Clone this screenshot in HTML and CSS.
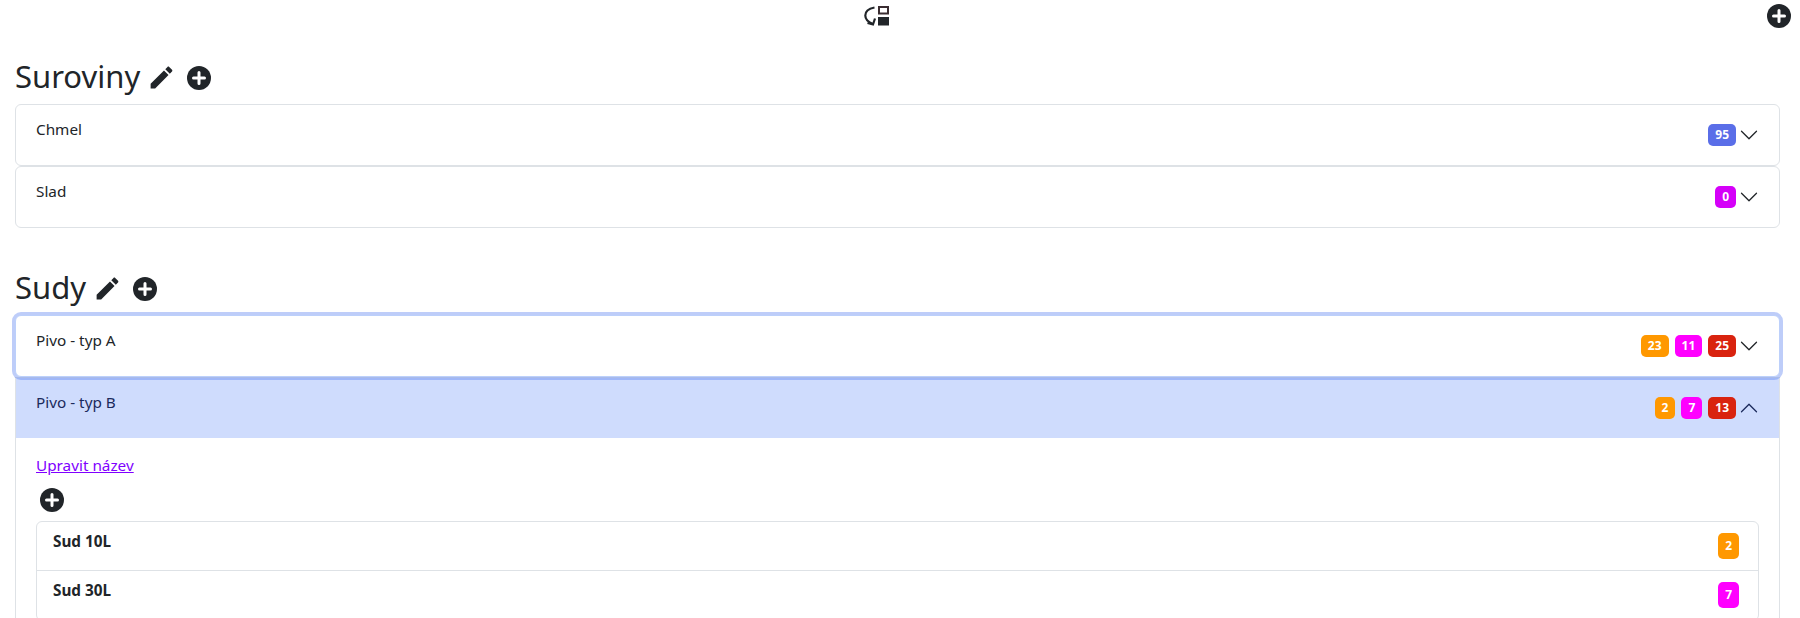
FILE: index.html
```html
<!DOCTYPE html>
<html lang="en">
<head>
  <meta charset="UTF-8" />
  <title>Sklad</title>
  <meta name="viewport" content="width=device-width, initial-scale=1.0" />
  <link rel="stylesheet" href="styles.css">
</head>
<body>
  <svg class="defs" width="0" height="0">
    <symbol id="plus" viewBox="0 0 24 24">
      <circle cx="12" cy="12" r="12" fill="#212529" />
      <path d="M12 6.500v11M6.500 12h11" stroke="#fff" stroke-width="3" stroke-linecap="round" />
    </symbol>
    <symbol id="pencil" viewBox="0 0 24 24">
      <path fill="#212529" d="M3 17.25V21h3.75L17.81 9.94l-3.75-3.75L3 17.25zM20.71 7.04c.39-.39.39-1.02 0-1.41l-2.34-2.34c-.39-.39-1.02-.39-1.41 0l-1.83 1.83 3.75 3.75 1.83-1.83z" />
    </symbol>
    <symbol id="chevron" viewBox="0 0 16 16">
      <path fill="currentColor" fill-rule="evenodd" d="M1.646 4.646a.5.5 0 0 1 .708 0L8 10.293l5.646-5.647a.5.5 0 0 1 .708.708l-6 6a.5.5 0 0 1-.708 0l-6-6a.5.5 0 0 1 0-.708z" />
    </symbol>
  </svg>

  <!-- Top bar -->
  <div class="topbar">
    <span></span>
    <svg class="switch" width="28" height="24" viewBox="0 0 28 24">
      <path d="M12.500 3.500C7 4.500 3.300 7.500 3.300 11.500c0 3.500 2.700 6.500 7.700 8.500" fill="none" stroke="#212529" stroke-width="2.200" />
      <path d="M13 14.500 11 20.500 5.500 19" fill="none" stroke="#212529" stroke-width="2.200" />
      <rect x="17" y="3" width="9" height="6.500" fill="#fff" stroke="#3a2d31" stroke-width="2" />
      <rect x="16" y="13" width="11" height="8.500" fill="#212529" />
    </svg>
    <svg class="plus plus-top"><use href="#plus" /></svg>
  </div>

  <!-- Suroviny -->
  <section class="group">
    <h2 class="group-title">Suroviny
      <svg class="pencil"><use href="#pencil" /></svg>
      <svg class="plus"><use href="#plus" /></svg>
    </h2>
    <div class="accordion">
      <div class="item">
        <div class="head">
          <span class="name">Chmel</span>
          <span class="badge blue">95</span>
          <svg class="chev"><use href="#chevron" /></svg>
        </div>
      </div>
      <div class="item">
        <div class="head">
          <span class="name">Slad</span>
          <span class="badge violet">0</span>
          <svg class="chev"><use href="#chevron" /></svg>
        </div>
      </div>
    </div>
  </section>

  <!-- Sudy -->
  <section class="group">
    <h2 class="group-title">Sudy
      <svg class="pencil"><use href="#pencil" /></svg>
      <svg class="plus"><use href="#plus" /></svg>
    </h2>
    <div class="accordion">
      <div class="item focused">
        <div class="head">
          <span class="name">Pivo - typ A</span>
          <span class="badge orange">23</span>
          <span class="badge pink">11</span>
          <span class="badge red">25</span>
          <svg class="chev"><use href="#chevron" /></svg>
        </div>
      </div>
      <div class="item open">
        <div class="head">
          <span class="name">Pivo - typ B</span>
          <span class="badge orange">2</span>
          <span class="badge pink">7</span>
          <span class="badge red">13</span>
          <svg class="chev"><use href="#chevron" /></svg>
        </div>
        <div class="body">
          <a class="rename" href="#">Upravit název</a>
          <svg class="plus plus-body"><use href="#plus" /></svg>
          <ul class="list">
            <li><b>Sud 10L</b><span class="badge tall orange">2</span></li>
            <li><b>Sud 30L</b><span class="badge tall pink">7</span></li>
          </ul>
        </div>
      </div>
    </div>
  </section>
</body>
</html>
```

FILE: styles.css
```css
/* ===== Basic Styles ===== */
html, body {
  height: 618px;
  overflow: hidden;
}
body {
  margin: 0;
  padding: 0 20px 0 15px;
  font-family: "Noto Sans", sans-serif;
  font-size: 15.3px;
  color: #212529;
  background: #fff;
}
.defs {
  position: absolute;
}
.topbar {
  display: flex;
  justify-content: space-between;
  align-items: center;
  height: 32px;
  margin-right: -11px;
}
.switch {
  display: block;
  margin-right: 30px;
}
.plus {
  width: 24px;
  height: 24px;
  flex: none;
}
.pencil {
  width: 29px;
  height: 29px;
  margin: 0 3px 0 -1px;
  vertical-align: -4px;
}
.group {
  margin-bottom: 39px;
}
.group-title {
  margin: 24px 0 8px;
  font-size: 31px;
  font-weight: 400;
  line-height: 40px;
}
.group-title .plus {
  vertical-align: -2px;
}

/* ===== Accordion ===== */
.item {
  border: 1px solid #dee2e6;
  border-radius: 6px;
  background: #fff;
}
.head {
  display: flex;
  align-items: center;
  gap: 6px;
  height: 60px;
  padding: 0 20px;
}
.name {
  margin: -12px auto 0 0;
}
.chev {
  width: 20px;
  height: 20px;
  margin-left: -3px;
}
.badge {
  height: 22px;
  padding: 0 7px;
  border-radius: 5px;
  color: #fff;
  font-size: 12px;
  font-weight: 700;
  line-height: 22px;
  text-align: center;
}
.blue { background: #5a6ee8; }
.violet { background: #d500f9; }
.orange { background: #ff9800; }
.pink { background: #ff00ff; }
.red { background: #d9230f; }
.focused {
  position: relative;
  z-index: 1;
  border-color: #bcd0fb;
  box-shadow: 0 0 0 3px rgba(80, 120, 240, 0.37);
}
.open {
  border-radius: 0;
}
.open .head {
  background: #cfdcfd;
  color: #1b2a5c;
}
.open .chev {
  transform: rotate(180deg);
}
.body {
  padding: 15px 20px 16px;
}
.rename {
  display: block;
  color: #8000ff;
  line-height: 24px;
}
.plus-body {
  display: block;
  margin: 11px 0 9px 4px;
}

/* ===== Inner list ===== */
.list {
  margin: 0;
  padding: 0;
  list-style: none;
  border: 1px solid #dee2e6;
  border-radius: 6px;
}
.list li {
  display: flex;
  justify-content: space-between;
  align-items: center;
  height: 48px;
  padding: 0 19px 0 16px;
  border-bottom: 1px solid #dee2e6;
}
.list b {
  margin-top: -10px;
}
.badge.tall {
  height: 26px;
  line-height: 26px;
}
```
